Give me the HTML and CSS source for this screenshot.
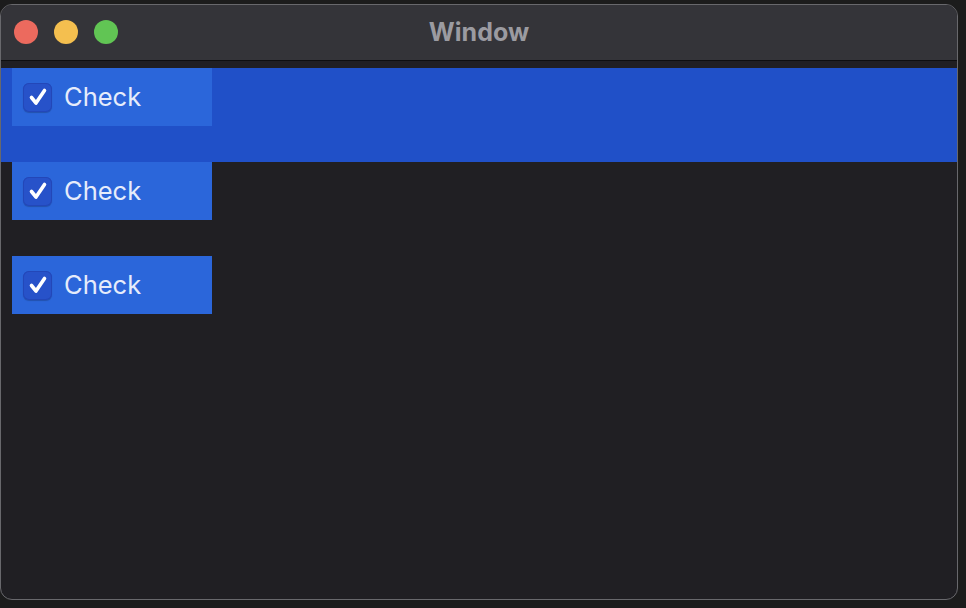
FILE: index.html
```html
<!DOCTYPE html>
<html>
<head>
<meta charset="utf-8">
<link rel="stylesheet" href="styles.css">
</head>
<body>
<div class="window">
  <div class="titlebar">
    <div class="lights">
      <span class="light red"></span>
      <span class="light yellow"></span>
      <span class="light green"></span>
    </div>
    <div class="title">Window</div>
  </div>
  <div class="content">
    <div class="slot selected">
      <label class="row">
        <span class="box"><svg viewBox="0 0 28 28" width="28" height="28"><path d="M7.5 14.5 L12 20 L20.5 7.5" fill="none" stroke="#ffffff" stroke-width="3.6" stroke-linecap="round" stroke-linejoin="round"/></svg></span>
        <span class="label">Check</span>
      </label>
    </div>
    <div class="slot">
      <label class="row">
        <span class="box"><svg viewBox="0 0 28 28" width="28" height="28"><path d="M7.5 14.5 L12 20 L20.5 7.5" fill="none" stroke="#ffffff" stroke-width="3.6" stroke-linecap="round" stroke-linejoin="round"/></svg></span>
        <span class="label">Check</span>
      </label>
    </div>
    <div class="slot">
      <label class="row">
        <span class="box"><svg viewBox="0 0 28 28" width="28" height="28"><path d="M7.5 14.5 L12 20 L20.5 7.5" fill="none" stroke="#ffffff" stroke-width="3.6" stroke-linecap="round" stroke-linejoin="round"/></svg></span>
        <span class="label">Check</span>
      </label>
    </div>
  </div>
</div>
</body>
</html>
```
FILE: styles.css
```css
html, body {
  margin: 0;
  padding: 0;
  background: #1c1c1c;
  width: 966px;
  height: 608px;
  overflow: hidden;
}
.window {
  margin-top: 4px;
  width: 958px;
  height: 596px;
  box-sizing: border-box;
  border: 1px solid #68686c;
  border-radius: 12px;
  overflow: hidden;
  background: #201f23;
  display: flex;
  flex-direction: column;
  font-family: Inter, "Noto Sans", sans-serif;
}
.titlebar {
  height: 55px;
  flex: none;
  background: #343439;
  border-bottom: 1px solid #0e0e10;
  position: relative;
  display: flex;
  align-items: center;
  justify-content: center;
}
.lights {
  position: absolute;
  left: 13px;
  top: 15px;
  display: flex;
  gap: 16px;
}
.light {
  width: 24px;
  height: 24px;
  border-radius: 50%;
  display: block;
}
.red { background: #ec6a5e; }
.yellow { background: #f4bf4f; }
.green { background: #61c554; }
.title {
  color: #9b9ba1;
  font-size: 25px;
  font-weight: 700;
  margin-top: -2px;
}
.content {
  flex: 1;
  padding-top: 7px;
}
.slot {
  height: 94px;
  padding-left: 11px;
}
.slot.selected {
  background: #2050c8;
}
.row {
  width: 200px;
  height: 58px;
  background: #2b66da;
  display: flex;
  align-items: center;
  padding-left: 11px;
  box-sizing: border-box;
  gap: 12px;
}
.box {
  width: 29px;
  height: 29px;
  border-radius: 6px;
  background: #2752c9;
  box-shadow: inset 0 0 0 1px #2347b8, 0 1px 1px rgba(0,0,0,0.2);
  display: flex;
  align-items: center;
  justify-content: center;
}
.box svg { display: block; }
.label {
  color: #e6ecfb;
  font-size: 25.5px;
  line-height: 1;
  margin-top: -1px;
}
```
